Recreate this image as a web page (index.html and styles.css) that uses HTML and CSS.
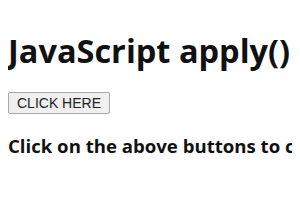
FILE: index.html
```html
<!DOCTYPE html>
<html lang="en">
<head>
  <meta charset="UTF-8" />
  <title>JavaScript apply()</title>
  <link rel="stylesheet" href="styles.css">
</head>
<body>
  <h1>JavaScript apply()</h1>
  <button class="btn">CLICK HERE</button>
  <h3 class="sample">Click on the above buttons to call the function</h3>
</body>
</html>
```

FILE: styles.css
```css
body {
  margin: 8px;
  font-family: "Open Sans", sans-serif;
  background: #fff;
  color: #111;
  overflow: hidden;
  white-space: nowrap;
}
h1 {
  font-size: 32.5px;
  margin: 20px 0 18px;
}
.btn {
  font-family: "Liberation Sans", Arial, sans-serif;
  font-size: 14px;
  padding: 2px 8px;
  background: #efefef;
  border: 1px solid #a8a8a8;
  border-radius: 2px;
  color: #222;
}
.sample {
  font-size: 18.6px;
  margin: 19px 0;
}
```
